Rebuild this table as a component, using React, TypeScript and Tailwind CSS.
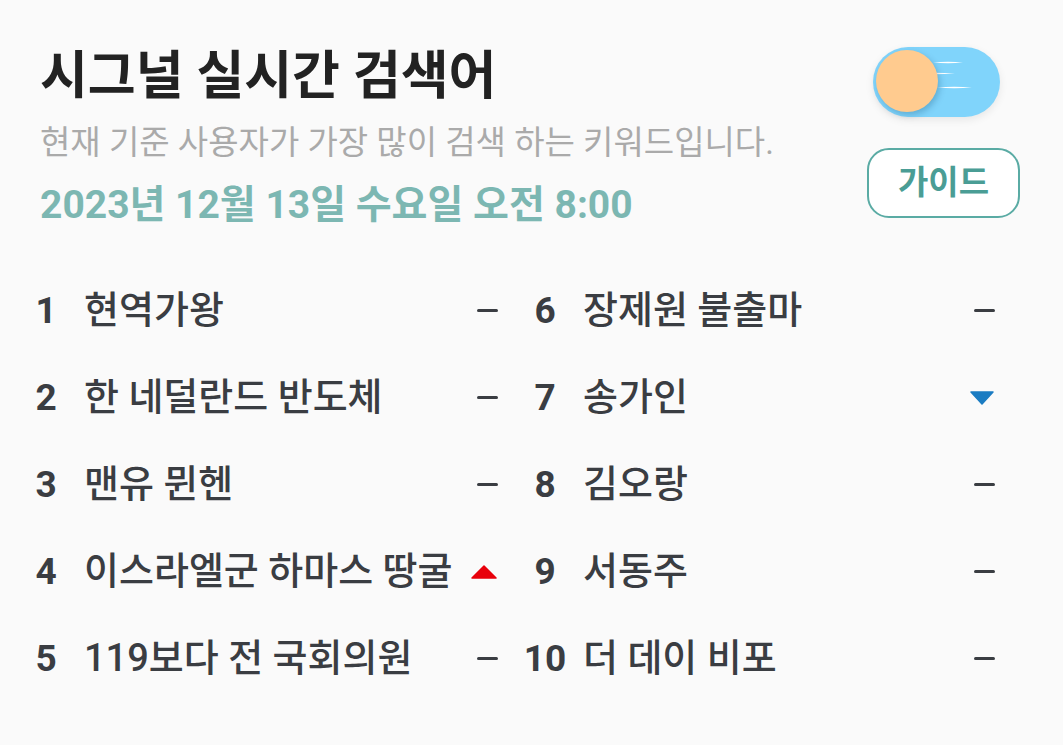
import React from 'react';

type Trend = 'same' | 'up' | 'down';

interface Keyword {
  rank: number;
  word: string;
  trend: Trend;
}

const keywords: Keyword[] = [
  { rank: 1, word: '현역가왕', trend: 'same' },
  { rank: 2, word: '한 네덜란드 반도체', trend: 'same' },
  { rank: 3, word: '맨유 뮌헨', trend: 'same' },
  { rank: 4, word: '이스라엘군 하마스 땅굴', trend: 'up' },
  { rank: 5, word: '119보다 전 국회의원', trend: 'same' },
  { rank: 6, word: '장제원 불출마', trend: 'same' },
  { rank: 7, word: '송가인', trend: 'down' },
  { rank: 8, word: '김오랑', trend: 'same' },
  { rank: 9, word: '서동주', trend: 'same' },
  { rank: 10, word: '더 데이 비포', trend: 'same' },
];

const TrendMark: React.FC<{ trend: Trend }> = ({ trend }) => {
  if (trend === 'up') {
    return (
      <svg width="28" height="14" viewBox="0 0 28 14">
        <path d="M14 1 L26 13 L2 13 Z" fill="#e8000b" strokeLinejoin="round" stroke="#e8000b" strokeWidth="1.5" />
      </svg>
    );
  }
  if (trend === 'down') {
    return (
      <svg width="26" height="14" viewBox="0 0 26 14">
        <path d="M2 1 L24 1 L13 13 Z" fill="#1b7cc2" strokeLinejoin="round" stroke="#1b7cc2" strokeWidth="1.5" />
      </svg>
    );
  }
  return <div className="w-[21px] h-[3px] rounded-full bg-[#3a3d42]" />;
};

const Toggle: React.FC = () => (
  <div className="relative w-[127px] h-[70px] rounded-full bg-[#80d4fb] shadow-[0_3px_8px_rgba(0,0,0,0.08)]">
    <svg className="absolute left-0 top-0" width="127" height="70" viewBox="0 0 127 70">
      <path d="M60 15.5 Q75 14 90 15.5 Q75 17 60 15.5 Z" fill="#ffffff" />
      <path d="M40 26.5 Q61 25 82 26.5 Q61 28 40 26.5 Z" fill="#ffffff" />
      <path d="M64 40.5 Q81 39 99 40.5 Q81 42 64 40.5 Z" fill="#ffffff" />
    </svg>
    <div className="absolute left-[3px] top-[3px] w-[62px] h-[62px] rounded-full bg-[#ffcb8f] shadow-[2px_3px_6px_rgba(0,60,100,0.25)]" />
  </div>
);

const App: React.FC = () => {
  const left = keywords.slice(0, 5);
  const right = keywords.slice(5);

  const renderColumn = (items: Keyword[], pr: string) => (
    <div className={`flex flex-col ${pr}`}>
      {items.map(k => (
        <div key={k.rank} className="flex items-center h-[87px]">
          <span className="w-[50px] text-center font-bold text-[37px] text-[#3a3d42]">{k.rank}</span>
          <span className="ml-[13px] flex-1 text-[38px] font-medium text-[#3a3d42] whitespace-nowrap">{k.word}</span>
          <div className="w-[30px] flex justify-end items-center">
            <TrendMark trend={k.trend} />
          </div>
        </div>
      ))}
    </div>
  );

  return (
    <div
      className="w-[1063px] h-[745px] bg-[#fafafa] overflow-hidden"
      style={{ fontFamily: 'Roboto, "Noto Sans CJK KR", "Noto Sans", sans-serif' }}
    >
      <div className="flex justify-between pl-[40px] pr-[43px]">
        <div className="pt-[47px]">
          <h1 className="text-[52px] leading-[60px] font-bold text-[#222222]">시그널 실시간 검색어</h1>
          <p className="mt-[16px] text-[33px] leading-[40px] text-[#aaaaaa]">현재 기준 사용자가 가장 많이 검색 하는 키워드입니다.</p>
          <p className="mt-[19px] text-[39px] leading-[46px] font-bold text-[#7cb7b2]">2023년 12월 13일 수요일 오전 8:00</p>
        </div>
        <div className="flex flex-col items-end pt-[47px]">
          <div className="mr-[20px]">
            <Toggle />
          </div>
          <button className="mt-[31px] w-[153px] h-[70px] rounded-[22px] border-2 border-[#5aaba4] bg-white text-[33px] font-bold text-[#4a9d95]">
            가이드
          </button>
        </div>
      </div>

      <div className="grid grid-cols-[499px_1fr] pl-[21px] mt-[39px]">
        {renderColumn(left, 'pr-[22px]')}
        {renderColumn(right, 'pr-[68px]')}
      </div>
    </div>
  );
};

export default App;
